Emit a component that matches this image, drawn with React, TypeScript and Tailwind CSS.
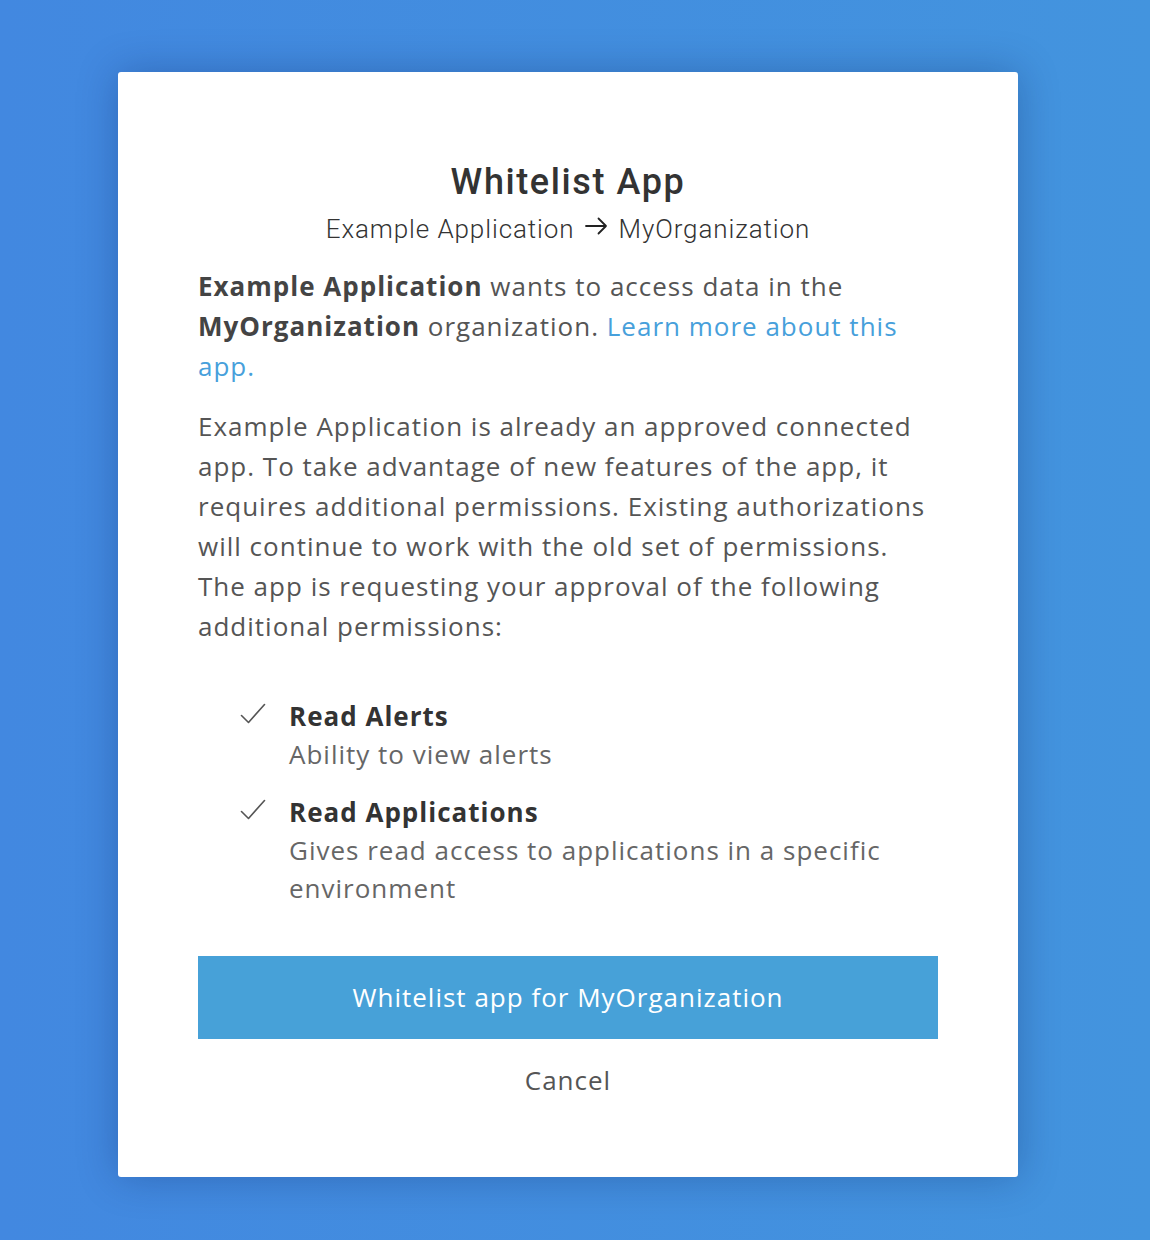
import React from "react";

function Check() {
  return (
    <svg width="26" height="22" viewBox="0 0 26 22" fill="none" className="shrink-0">
      <path d="M1.5 12.5 L8.5 19.5 L24.5 1.5" stroke="#555" strokeWidth="1.6" strokeLinecap="round" strokeLinejoin="round" />
    </svg>
  );
}

export default function App() {
  const sans = { fontFamily: '"Open Sans", "Noto Sans", sans-serif' };
  const din = { fontFamily: 'Roboto, "Noto Sans", sans-serif' };
  return (
    <div className="min-h-[1240px] w-full bg-[linear-gradient(90deg,#4288e0,#4394de)] pt-[72px] pb-[63px]" style={sans}>
      <div className="ml-[118px] w-[900px] rounded-[3px] bg-white px-[80px] pt-[90px] pb-[79px] shadow-[0_0_40px_rgba(0,20,80,0.28)] tracking-[1px]">
        <h1 className="text-center text-[36px] font-medium leading-[40px] tracking-[1.6px] text-[#333]" style={din}>Whitelist App</h1>
        <div className="mt-3 flex items-center justify-center text-[26px] font-light leading-[30px] tracking-[0.9px] text-[#333]" style={din}>
          <span>Example Application</span>
          <svg width="24" height="20" viewBox="0 0 24 20" fill="none" className="mx-[10px] -mt-[6px]">
            <path d="M1 10 H21 M13.5 2.5 L21 10 L13.5 17.5" stroke="#222" strokeWidth="1.8" strokeLinecap="round" strokeLinejoin="round" />
          </svg>
          <span>MyOrganization</span>
        </div>
        <p className="mt-[22px] text-[26px] leading-[40px] text-[#555]">
          <b className="font-bold text-[#444]">Example Application</b> wants to access data in the{" "}
          <b className="font-bold text-[#444]">MyOrganization</b> organization.{" "}
          <a className="text-[#47a0db]">Learn more about this app.</a>
        </p>
        <p className="mt-[20px] text-[26px] leading-[40px] text-[#555]">
          Example Application is already an approved connected app. To take advantage of new features of the app, it requires additional permissions. Existing authorizations will continue to work with the old set of permissions. The app is requesting your approval of the following additional permissions:
        </p>
        <ul className="mt-[51px] flex flex-col gap-[20px] pl-[42px]">
          {[
            { t: "Read Alerts", d: "Ability to view alerts" },
            { t: "Read Applications", d: "Gives read access to applications in a specific environment" },
          ].map((it) => (
            <li key={it.t} className="flex gap-[23px]">
              <div className="pt-[6px]"><Check /></div>
              <div className="text-[26px] leading-[38px]">
                <div className="font-bold text-[#333]">{it.t}</div>
                <div className="text-[#666]">{it.d}</div>
              </div>
            </li>
          ))}
        </ul>
        <button className="mt-[49px] flex h-[83px] w-full items-center justify-center bg-[#47a1d8] text-[26px] tracking-[1px] text-white">
          Whitelist app for MyOrganization
        </button>
        <div className="mt-[23px] text-center text-[26px] leading-[36px] text-[#555]">Cancel</div>
      </div>
    </div>
  );
}
